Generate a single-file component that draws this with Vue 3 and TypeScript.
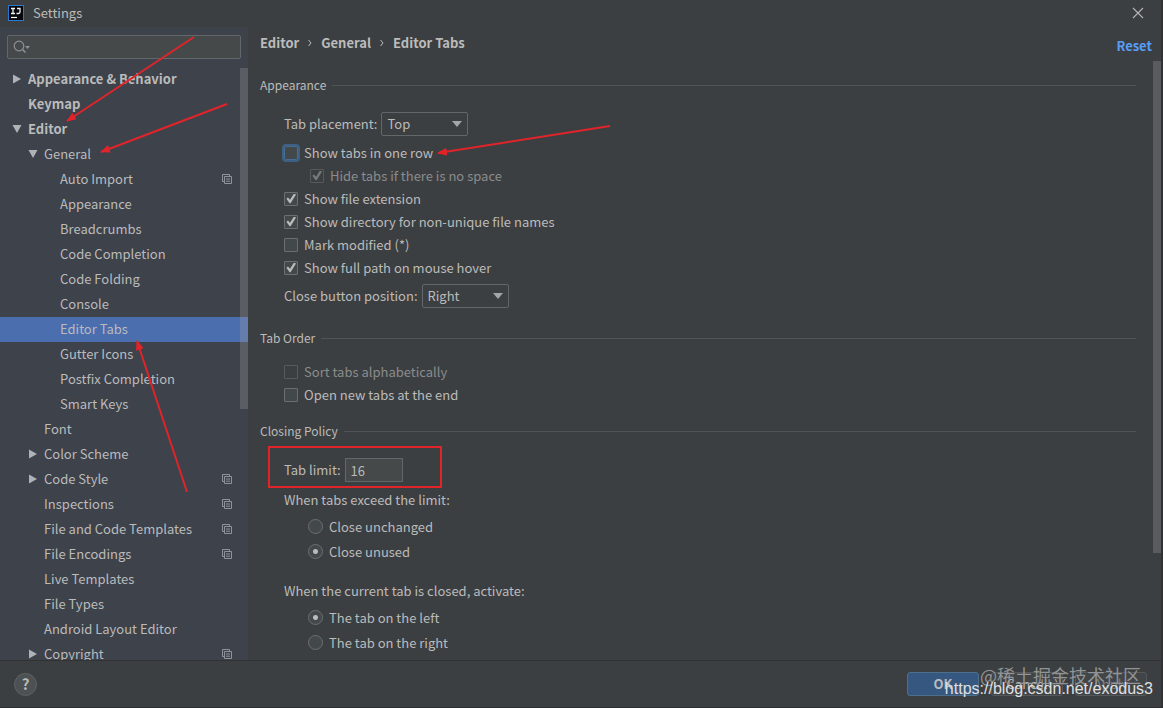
<script setup lang="ts">
import { ref } from 'vue'

interface TreeItem {
  label: string
  level: number
  state?: 'open' | 'closed'
  project?: boolean
}

const tree: TreeItem[] = [
  { label: 'Appearance & Behavior', level: 0, state: 'closed' },
  { label: 'Keymap', level: 0 },
  { label: 'Editor', level: 0, state: 'open' },
  { label: 'General', level: 1, state: 'open' },
  { label: 'Auto Import', level: 2, project: true },
  { label: 'Appearance', level: 2 },
  { label: 'Breadcrumbs', level: 2 },
  { label: 'Code Completion', level: 2 },
  { label: 'Code Folding', level: 2 },
  { label: 'Console', level: 2 },
  { label: 'Editor Tabs', level: 2 },
  { label: 'Gutter Icons', level: 2 },
  { label: 'Postfix Completion', level: 2 },
  { label: 'Smart Keys', level: 2 },
  { label: 'Font', level: 1 },
  { label: 'Color Scheme', level: 1, state: 'closed' },
  { label: 'Code Style', level: 1, state: 'closed', project: true },
  { label: 'Inspections', level: 1, project: true },
  { label: 'File and Code Templates', level: 1, project: true },
  { label: 'File Encodings', level: 1, project: true },
  { label: 'Live Templates', level: 1 },
  { label: 'File Types', level: 1 },
  { label: 'Android Layout Editor', level: 1 },
  { label: 'Copyright', level: 1, state: 'closed', project: true },
]

const selected = ref('Editor Tabs')
const search = ref('')
const placement = ref('Top')
const closePosition = ref('Right')
const tabLimit = ref('16')
const exceed = ref('unused')
const activate = ref('left')

const appearance = ref([
  { id: 'one-row', label: 'Show tabs in one row', on: false, focus: true },
  { id: 'hide', label: 'Hide tabs if there is no space', on: true, disabled: true, nested: true },
  { id: 'ext', label: 'Show file extension', on: true },
  { id: 'dir', label: 'Show directory for non-unique file names', on: true },
  { id: 'mod', label: 'Mark modified (*)', on: false },
  { id: 'path', label: 'Show full path on mouse hover', on: true },
])
const order = ref([
  { id: 'sort', label: 'Sort tabs alphabetically', on: false, disabled: true },
  { id: 'end', label: 'Open new tabs at the end', on: false },
])
</script>

<template>
  <div class="window">
    <header class="titlebar">
      <svg class="logo" viewBox="0 0 16 16" aria-hidden="true">
        <rect x="0.5" y="0.5" width="15" height="15" fill="#05070b" stroke="#2b78cf" />
        <path d="M3 3.5h4M5 3.5v5M3 8.5h4M9 3.5h3v3.500q0 1.500-1.500 1.500H8.500" fill="none" stroke="#f2f2f2" stroke-width="1.300" />
        <path d="M3 12.500h6" stroke="#fff" stroke-width="1.200" />
      </svg>
      <h1>Settings</h1>
      <button class="close" type="button" aria-label="Close">
        <svg viewBox="0 0 12 12"><path d="M1 1l10 10M11 1L1 11" stroke="#b4b6b7" stroke-width="1.100" /></svg>
      </button>
    </header>

    <div class="body">
      <aside class="sidebar">
        <div class="search">
          <svg viewBox="0 0 18 16" aria-hidden="true">
            <circle cx="6" cy="7" r="4.800" fill="none" stroke="#8d9193" stroke-width="1.200" />
            <path d="M9.500 10.500l3 3" stroke="#8d9193" stroke-width="1.500" />
            <path d="M12 7h5l-2.500 3z" fill="#8d9193" />
          </svg>
          <input v-model="search" type="text" aria-label="Search settings" />
        </div>
        <nav class="tree">
          <button
            v-for="item in tree"
            :key="item.level + item.label"
            type="button"
            class="node"
            :class="['level-' + item.level, { selected: selected === item.label }]"
            @click="selected = item.label"
          >
            <span class="twist">
              <svg v-if="item.state === 'closed'" viewBox="0 0 10 10"><path d="M1 0.500l8 4.500-8 4.500z" fill="#afb2b7" /></svg>
              <svg v-else-if="item.state === 'open'" viewBox="0 0 10 10"><path d="M0.500 1h9L5 9z" fill="#afb2b7" /></svg>
            </span>
            <span class="name">{{ item.label }}</span>
            <svg v-if="item.project" class="project" viewBox="0 0 10 10">
              <path d="M2.500 7.500h-2v-7h7v2M2.500 2.500h7v7h-7zM4 5h4M4 7.200h4" fill="none" stroke="#8f949b" />
            </svg>
          </button>
        </nav>
        <div class="thumb"></div>
      </aside>

      <main class="content">
        <div class="crumbs">
          <span>Editor</span>
          <svg viewBox="0 0 4 8"><path d="M0.500 1l2.500 3-2.500 3" fill="none" stroke="#bbbbbb" /></svg>
          <span>General</span>
          <svg viewBox="0 0 4 8"><path d="M0.500 1l2.500 3-2.500 3" fill="none" stroke="#bbbbbb" /></svg>
          <span>Editor Tabs</span>
          <a class="reset" href="#">Reset</a>
        </div>

        <section class="first">
          <h2>Appearance</h2>
          <div class="field">
            <label for="placement">Tab placement:</label>
            <span class="combo">
              <select id="placement" v-model="placement">
                <option>Top</option>
                <option>Bottom</option>
                <option>Left</option>
                <option>Right</option>
                <option>None</option>
              </select>
              <svg viewBox="0 0 10 6"><path d="M0 0h10L5 6z" fill="#a3a6a8" /></svg>
            </span>
          </div>
          <div class="checks">
            <label
              v-for="c in appearance"
              :key="c.id"
              class="option"
              :class="{ nested: c.nested, disabled: c.disabled }"
            >
              <input v-model="c.on" type="checkbox" :class="{ focused: c.focus }" :disabled="c.disabled" />
              {{ c.label }}
            </label>
          </div>
          <div class="field second">
            <label for="close-position">Close button position:</label>
            <span class="combo">
              <select id="close-position" v-model="closePosition">
                <option>Right</option>
                <option>Left</option>
                <option>None</option>
              </select>
              <svg viewBox="0 0 10 6"><path d="M0 0h10L5 6z" fill="#a3a6a8" /></svg>
            </span>
          </div>
        </section>

        <section class="order">
          <h2>Tab Order</h2>
          <div class="checks">
            <label v-for="c in order" :key="c.id" class="option" :class="{ disabled: c.disabled }">
              <input v-model="c.on" type="checkbox" :disabled="c.disabled" />
              {{ c.label }}
            </label>
          </div>
        </section>

        <section class="policy">
          <h2>Closing Policy</h2>
          <div class="field">
            <label for="limit">Tab limit:</label>
            <input id="limit" v-model="tabLimit" class="limit" type="text" />
          </div>
          <fieldset>
            <legend>When tabs exceed the limit:</legend>
            <label class="choice"><input v-model="exceed" type="radio" name="exceed" value="unchanged" />Close unchanged</label>
            <label class="choice"><input v-model="exceed" type="radio" name="exceed" value="unused" />Close unused</label>
          </fieldset>
          <fieldset class="activate">
            <legend>When the current tab is closed, activate:</legend>
            <label class="choice"><input v-model="activate" type="radio" name="activate" value="left" />The tab on the left</label>
            <label class="choice"><input v-model="activate" type="radio" name="activate" value="right" />The tab on the right</label>
          </fieldset>
        </section>
        <div class="thumb main-thumb"></div>
      </main>
    </div>

    <footer class="footer">
      <button class="help" type="button" aria-label="Help">?</button>
      <button class="btn primary" type="button">OK</button>
      <button class="btn" type="button">Cancel</button>
      <button class="btn" type="button" disabled>Apply</button>
    </footer>

    <svg class="marks" width="640" height="520" viewBox="0 0 640 520" aria-hidden="true">
      <defs>
        <marker id="head" markerUnits="userSpaceOnUse" markerWidth="10" markerHeight="8" refX="9" refY="4" orient="auto">
          <path d="M0 0l10 4-10 4z" fill="#e0242a" />
        </marker>
      </defs>
      <g stroke="#e0242a" stroke-width="2" fill="none">
        <path d="M194 37L67 121" marker-end="url(#head)" />
        <path d="M227 104L101 152" marker-end="url(#head)" />
        <path d="M610 126L438 153" marker-end="url(#head)" />
        <path d="M187 492L137 341" marker-end="url(#head)" />
        <rect x="269" y="447" width="172" height="40" />
      </g>
    </svg>
    <span class="stamp community">@稀土掘金技术社区</span>
    <span class="stamp url">https://blog.csdn.net/exodus3</span>
  </div>
</template>

<style>
body {
  margin: 0;
  background: #3c3f41;
}
</style>

<style scoped>
* {
  box-sizing: border-box;
}
.window {
  position: relative;
  display: flex;
  flex-direction: column;
  height: 100vh;
  overflow: hidden;
  background: #3c3f41;
  border-right: 2px solid #303234;
  border-bottom: 1px solid #2b2d2e;
  color: #bbbbbb;
  font: 13px/20px "Noto Sans CJK SC", "Noto Sans", sans-serif;
}
button,
input,
select {
  margin: 0;
  font: inherit;
  color: inherit;
}
svg {
  display: block;
}
.titlebar {
  flex: none;
  display: flex;
  align-items: center;
  height: 27px;
  padding: 0 17px 1px 8px;
}
.logo {
  width: 16px;
  height: 16px;
}
h1 {
  flex: 1;
  margin: 0 0 0 9px;
  font-size: 13px;
  font-weight: 400;
}
.close {
  padding: 0;
  border: 0;
  background: none;
}
.close svg {
  width: 12px;
  height: 12px;
}
.body {
  flex: 1;
  display: flex;
  min-height: 0;
}
.sidebar {
  position: relative;
  flex: none;
  display: flex;
  flex-direction: column;
  width: 248px;
  padding-top: 8px;
  background: #3d424b;
}
.search {
  flex: none;
  display: flex;
  align-items: center;
  height: 24px;
  margin: 0 7px 8px;
  padding-left: 5px;
  border: 1px solid #62676a;
  border-radius: 2px;
  background: #45494a;
}
.search svg {
  width: 18px;
  height: 16px;
}
.search input {
  flex: 1;
  min-width: 0;
  border: 0;
  outline: 0;
  background: none;
}
.tree {
  flex: 1;
  min-height: 0;
  overflow: hidden;
}
.node {
  display: flex;
  align-items: center;
  width: 100%;
  height: 25px;
  padding: 0 16px 2px 12px;
  border: 0;
  background: none;
  text-align: left;
  white-space: nowrap;
}
.level-0 {
  font-weight: 700;
}
.level-1 {
  padding-left: 28px;
}
.level-2 {
  padding-left: 44px;
}
.selected {
  background: #4b6eaf;
}
.twist {
  width: 16px;
}
.twist svg {
  width: 10px;
  height: 10px;
}
.name {
  flex: 1;
}
.project {
  width: 10px;
  height: 10px;
}
.thumb {
  position: absolute;
  top: 41px;
  right: 0;
  width: 8px;
  height: 341px;
  background: rgba(166, 166, 166, 0.28);
}
.content {
  position: relative;
  flex: 1;
  min-width: 0;
  padding: 0 25px 0 12px;
}
.main-thumb {
  top: 34px;
  height: 492px;
}
.crumbs {
  display: flex;
  align-items: center;
  gap: 9px;
  height: 32px;
  margin-right: -16px;
  font-weight: 700;
}
.crumbs svg {
  width: 4px;
  height: 8px;
}
.reset {
  margin-left: auto;
  padding-top: 6px;
  color: #589df6;
  text-decoration: none;
}
h2 {
  display: flex;
  align-items: center;
  gap: 6px;
  margin: 0;
  font-size: 12px;
  line-height: 20px;
  font-weight: 400;
}
h2::after {
  content: "";
  flex: 1;
  height: 1px;
  background: #515456;
}
.first {
  padding-top: 16px;
}
.order {
  padding-top: 20px;
}
.policy {
  padding-top: 15px;
}
.field {
  display: flex;
  align-items: center;
  gap: 4px;
  margin: 17px 0 0 24px;
}
.field.second {
  margin-top: 5px;
}
.combo {
  position: relative;
}
.combo select {
  display: block;
  width: 87px;
  height: 24px;
  padding: 0 24px 0 5px;
  appearance: none;
  border: 1px solid #646769;
  border-radius: 2px;
  background: #3c3f41;
}
.combo svg {
  position: absolute;
  top: 9px;
  right: 6px;
  width: 10px;
  height: 6px;
  pointer-events: none;
}
.checks {
  margin: 5px 0 0 24px;
}
.order .checks {
  margin-top: 12px;
}
.option {
  display: flex;
  align-items: center;
  gap: 6px;
  height: 23px;
}
.nested {
  margin-left: 26px;
}
.disabled {
  color: #8a8c8d;
}
.option input {
  position: relative;
  width: 14px;
  height: 14px;
  appearance: none;
  border: 1px solid #6b6f71;
  border-radius: 1px;
  background: #43494a;
}
.option input:disabled {
  border-color: #565a5b;
  background: #3c3f41;
}
.option input.focused {
  border-color: #466d94;
  outline: 2px solid #3d6185;
  border-radius: 2px;
}
.option input:checked::after {
  content: "";
  position: absolute;
  inset: 1px;
  background: #bbbbbb;
  clip-path: polygon(4% 52%, 20% 40%, 40% 62%, 80% 0, 100% 10%, 46% 98%, 36% 98%);
}
.option input:disabled:checked::after {
  background: #77797a;
}
.limit {
  width: 58px;
  height: 24px;
  padding: 0 5px;
  border: 1px solid #646769;
  background: #45494a;
}
fieldset {
  margin: 8px 0 0 24px;
  padding: 0;
  border: 0;
}
.activate {
  margin-top: 17px;
}
legend {
  padding: 0 0 4px;
}
.choice {
  display: flex;
  align-items: center;
  gap: 6px;
  height: 25px;
  margin-left: 24px;
}
.choice input {
  width: 15px;
  height: 15px;
  appearance: none;
  border: 1px solid #6b6f71;
  border-radius: 50%;
  background: #43494a;
}
.choice input:checked {
  background: radial-gradient(circle, #bbbbbb 2px, #43494a 3px);
}
.footer {
  flex: none;
  display: flex;
  align-items: center;
  gap: 12px;
  height: 47px;
  padding: 0 14px;
  border-top: 1px solid #303234;
  background: #3c3f41;
}
.help {
  width: 23px;
  height: 23px;
  margin-right: auto;
  padding: 0;
  border: 1px solid #5e6263;
  border-radius: 50%;
  background: #4c5254;
  font-size: 15px;
  font-weight: 700;
}
.btn {
  width: 72px;
  height: 24px;
  padding: 0;
  border: 1px solid #55595b;
  border-radius: 3px;
  background: #414547;
}
.btn:disabled {
  color: #7b7d7e;
}
.primary {
  border-color: #4c708c;
  background: #365880;
  font-weight: 700;
}
.marks {
  position: absolute;
  top: 0;
  left: 0;
  pointer-events: none;
}
.stamp {
  position: absolute;
  white-space: nowrap;
  pointer-events: none;
}
.community {
  right: 20px;
  bottom: 20px;
  color: #929495;
  font-size: 18px;
  line-height: 24px;
}
.url {
  right: 8px;
  bottom: 8px;
  color: #e0e0e0;
  font-family: "Liberation Sans", sans-serif;
  font-size: 16px;
  line-height: 20px;
}
</style>
